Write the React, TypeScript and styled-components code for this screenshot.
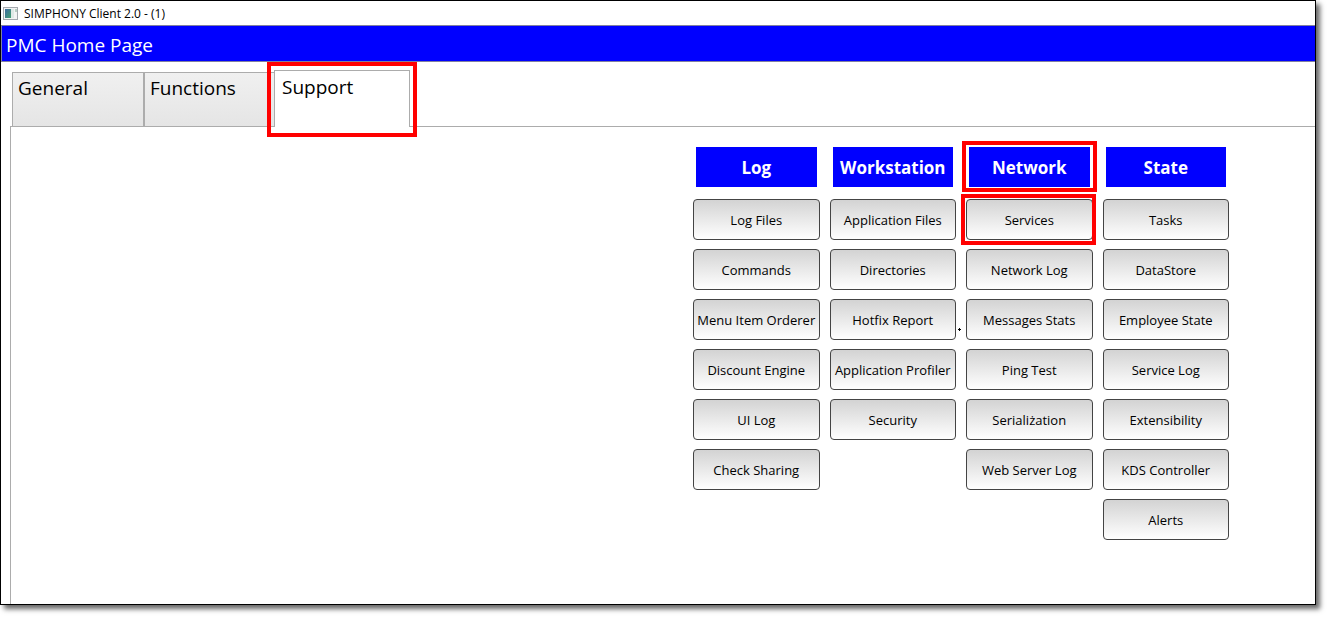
import React from "react";
import styled, { createGlobalStyle, css } from "styled-components";

const GlobalStyle = createGlobalStyle`
  * { box-sizing: border-box; }
  html, body, #root { height: 100%; margin: 0; }
  body { background: #fff; color: #000; font-family: "Open Sans", "Noto Sans", sans-serif; }
  button { font-family: inherit; color: inherit; margin: 0; }
`;

const Desktop = styled.div`
  min-height: 100%;
  display: flex;
  padding: 0 15px 15px 0;
`;

const Window = styled.main`
  flex: 1;
  display: flex;
  flex-direction: column;
  border: 1px solid #000;
  background: #fff;
  box-shadow: 4px 4px 5px rgba(0, 0, 0, 0.6);
`;

const TitleBar = styled.header`
  display: flex;
  align-items: center;
  gap: 5px;
  height: 24px;
  padding-left: 2px;
  font-size: 12px;
`;

const PageHeading = styled.h1`
  height: 37px;
  margin: 0;
  padding-left: 4px;
  border: 1px solid #8080a0;
  border-right: 0;
  background: #00f;
  color: #fff;
  font-size: 19px;
  font-weight: 400;
  line-height: 38px;
`;

const redFrame = css`
  content: "";
  position: absolute;
  border: 4px solid #f00;
  pointer-events: none;
`;

const TabList = styled.div`
  display: flex;
  align-items: flex-end;
  padding: 8px 0 0 11px;
`;

const Tab = styled.button<{ $active?: boolean }>`
  position: relative;
  display: flex;
  align-items: flex-start;
  width: ${(p) => (p.$active ? 136 : 132)}px;
  height: ${(p) => (p.$active ? 57 : 54)}px;
  margin: ${(p) => (p.$active ? "0 0 -1px -2px" : "0")};
  padding: ${(p) => (p.$active ? "4px 7px" : "3px 5px")};
  border: 1px solid #acacac;
  border-bottom: 0;
  background: ${(p) => (p.$active ? "#fff" : "linear-gradient(#f0f0f0, #e5e5e5)")};
  font-size: 19px;
  line-height: 24px;

  &::after {
    ${(p) => p.$active && redFrame}
    inset: -9px -8px -10px;
  }
`;

const Panel = styled.section`
  flex: 1;
  display: flex;
  justify-content: flex-end;
  align-items: flex-start;
  margin-left: 9px;
  padding: 20px 86px 20px 0;
  border: solid #acacac;
  border-width: 1px 0 0 1px;
`;

const Groups = styled.div`
  display: grid;
  grid-template-columns: repeat(4, 1fr);
  gap: 10px;
  width: 536px;
`;

const Group = styled.div`
  display: flex;
  flex-direction: column;
  gap: 9px;
`;

const GroupTitle = styled.h2<{ $marked?: boolean }>`
  position: relative;
  margin: 0 3px 3px;
  height: 40px;
  background: #00f;
  color: #fff;
  font-size: 17px;
  font-weight: 700;
  line-height: 41px;
  text-align: center;
  white-space: nowrap;

  &::after {
    ${(p) => p.$marked && redFrame}
    inset: -6px -7px -5px;
  }
`;

const Action = styled.button<{ $marked?: boolean }>`
  position: relative;
  display: flex;
  align-items: center;
  justify-content: center;
  height: 41px;
  padding: 0;
  border: 1px solid #444;
  border-radius: 4px;
  background: linear-gradient(#d3d3d3, #fff);
  font-size: 13px;
  white-space: nowrap;

  &::after {
    ${(p) => p.$marked && redFrame}
    inset: -6px -4px -6px -6px;
  }
`;

const Speck = styled.svg`
  position: absolute;
  right: -6px;
  bottom: 8px;
`;

const groups = [
  { title: "Log", items: ["Log Files", "Commands", "Menu Item Orderer", "Discount Engine", "UI Log", "Check Sharing"] },
  { title: "Workstation", items: ["Application Files", "Directories", "Hotfix Report", "Application Profiler", "Security"] },
  { title: "Network", items: ["Services", "Network Log", "Messages Stats", "Ping Test", "Serialiżation", "Web Server Log"] },
  { title: "State", items: ["Tasks", "DataStore", "Employee State", "Service Log", "Extensibility", "KDS Controller", "Alerts"] },
];

const AppIcon = () => (
  <svg width="16" height="14" viewBox="0 0 16 14" aria-hidden="true">
    <defs>
      <linearGradient id="pane" x1="0" y1="0" x2="1" y2="1">
        <stop offset="0" stopColor="#3c6aa0" />
        <stop offset="1" stopColor="#45a070" />
      </linearGradient>
    </defs>
    <rect x="0.5" y="1.5" width="14" height="12" fill="#f4f4f4" stroke="#a4a9ae" />
    <rect x="2" y="3" width="6" height="9" fill="url(#pane)" />
    <rect x="8" y="3" width="3" height="9" fill="#dfe9e6" />
    <rect x="12" y="3" width="2" height="3" fill="#b9cfc4" />
  </svg>
);

export default function App() {
  return (
    <>
      <GlobalStyle />
      <Desktop>
        <Window>
          <TitleBar>
            <AppIcon />
            <span>SIMPHONY Client 2.0 - (1)</span>
          </TitleBar>
          <PageHeading>PMC Home Page</PageHeading>
          <TabList role="tablist">
            <Tab role="tab" aria-selected={false}>General</Tab>
            <Tab role="tab" aria-selected={false}>Functions</Tab>
            <Tab role="tab" aria-selected $active>Support</Tab>
          </TabList>
          <Panel role="tabpanel">
            <Groups>
              {groups.map((group) => (
                <Group key={group.title}>
                  <GroupTitle $marked={group.title === "Network"}>{group.title}</GroupTitle>
                  {group.items.map((item) => (
                    <Action key={item} type="button" $marked={item === "Services"}>
                      {item}
                      {item === "Hotfix Report" && (
                        <Speck width="3" height="3" viewBox="0 0 3 3" aria-hidden="true">
                          <path d="M1 0h1v1h1v1h-1v1h-1v-1h-1v-1h1z" />
                        </Speck>
                      )}
                    </Action>
                  ))}
                </Group>
              ))}
            </Groups>
          </Panel>
        </Window>
      </Desktop>
    </>
  );
}
